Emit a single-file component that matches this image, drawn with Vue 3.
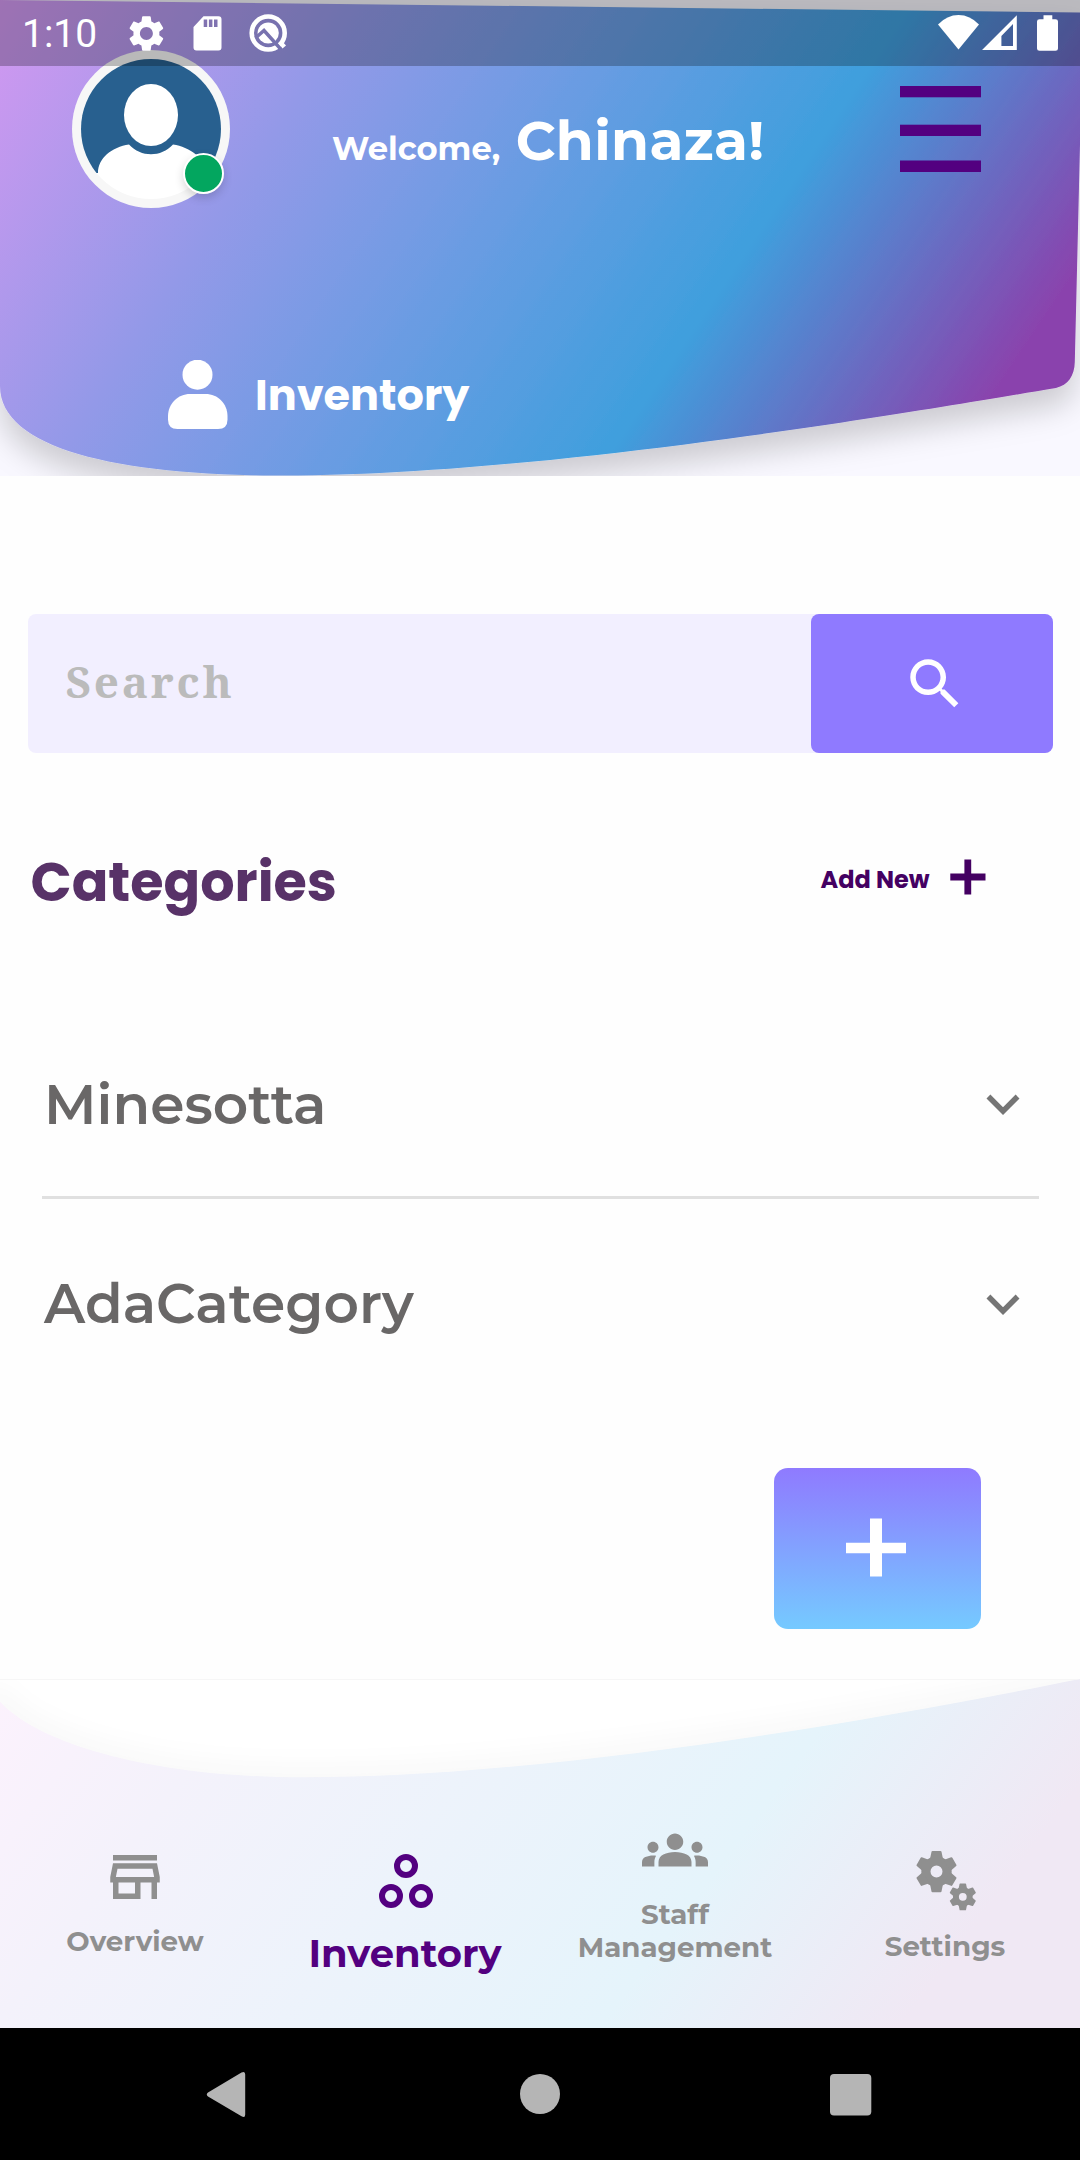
<script setup>
const categories = ['Minesotta', 'AdaCategory']
const toothAngles = [0, 60, 120, 180, 240, 300]
</script>

<template>
  <div class="screen">
    <header class="header">
      <svg class="header-bg" width="1080" height="476" viewBox="0 0 1080 476">
        <defs>
          <linearGradient id="headerFill" gradientUnits="userSpaceOnUse" x1="0" y1="0" x2="867" y2="582">
            <stop offset="0" stop-color="#d398f1" />
            <stop offset=".29" stop-color="#9399e8" />
            <stop offset=".727" stop-color="#3f9fdd" />
            <stop offset="1" stop-color="#8a43ad" />
          </linearGradient>
          <filter id="headerShadow" x="-10%" y="-10%" width="120%" height="135%">
            <feDropShadow dx="0" dy="18" stdDeviation="15" flood-color="#000" flood-opacity=".18" />
          </filter>
        </defs>
        <rect width="1080" height="476" fill="#f9f8ff" />
        <path filter="url(#headerShadow)" fill="url(#headerFill)" d="M0 0L1080 12.500V145L1074.800 362C1074.500 376 1068 385 1056 388C900 414 540 475.500 282 475.500C115 475.500 0 448 0 386Z" />
      </svg>

      <div class="header-top">
        <div class="avatar">
          <svg width="158" height="158" viewBox="0 0 158 158">
            <defs><clipPath id="face"><circle cx="79" cy="79" r="70" /></clipPath></defs>
            <circle cx="79" cy="79" r="79" fill="#f7f7f7" />
            <g clip-path="url(#face)">
              <path fill="#28608f" d="M0 0H158V123H0Z" />
              <path fill="#fff" d="M26 123C26 108 40 97 57 94.500C69 107.500 89 107.500 101 94.500C118 97 132 108 136 123H158V158H0V123Z" />
              <ellipse cx="79" cy="65" rx="27" ry="31" fill="#fff" />
            </g>
          </svg>
          <span class="online"></span>
        </div>
        <div class="greeting">
          <span class="welcome">Welcome,</span>
          <span class="name">Chinaza!</span>
        </div>
        <svg class="menu" width="81" height="88" viewBox="0 0 81 88" fill="#530080">
          <rect y="1" width="81" height="11.300" />
          <rect y="39.700" width="81" height="11.300" />
          <rect y="75.500" width="81" height="11.500" />
        </svg>
      </div>

      <div class="page-title">
        <svg width="60" height="70" viewBox="0 0 60 70" fill="#fff">
          <circle cx="29.500" cy="14.700" r="15" />
          <path d="M22 34H37.500C50 34 59.500 43.500 59.500 56.500V59.500Q59.500 69 50 69H9.500Q0 69 0 59.500V56.500C0 43.500 10 34 22 34Z" />
        </svg>
        <h1>Inventory</h1>
      </div>

      <div class="status-bar">
        <span class="clock">1:10</span>
        <svg class="status-icons" width="985" height="66" viewBox="95 0 985 66" fill="#fff">
          <defs>
            <mask id="cut" maskUnits="userSpaceOnUse" x="245" y="10" width="46" height="48">
              <rect x="245" y="10" width="46" height="48" fill="#fff" />
              <path d="M255.500 38L264 30.500L282 50.500" fill="none" stroke="#000" stroke-width="3.400" />
            </mask>
          </defs>
          <path transform="translate(124.800 11.900) scale(1.8)" d="M19.140 12.940c.04-.3.060-.61.060-.94 0-.32-.02-.64-.07-.94l2.030-1.580c.18-.14.23-.41.12-.61l-1.920-3.320c-.12-.22-.37-.29-.59-.22l-2.390.96c-.5-.38-1.030-.7-1.620-.94l-.36-2.540c-.04-.24-.24-.41-.48-.41h-3.840c-.24 0-.43.17-.47.41l-.36 2.540c-.59.24-1.130.57-1.620.94l-2.390-.96c-.22-.08-.47 0-.59.22L2.740 8.870c-.12.21-.08.47.12.61l2.030 1.580c-.05.3-.09.63-.09.94s.02.64.07.94l-2.030 1.580c-.18.14-.23.41-.12.61l1.920 3.320c.12.22.37.29.59.22l2.390-.96c.5.38 1.030.7 1.620.94l.36 2.540c.05.24.24.41.48.41h3.840c.24 0 .44-.17.47-.41l.36-2.540c.59-.24 1.130-.56 1.620-.94l2.390.96c.22.08.47 0 .59-.22l1.920-3.320c.12-.22.07-.47-.12-.61l-2.010-1.580zM12 15.600c-1.980 0-3.600-1.620-3.600-3.600s1.620-3.600 3.600-3.600 3.600 1.620 3.600 3.600-1.620 3.600-3.600 3.600z" />
          <path fill-rule="evenodd" d="M203.500 16.300H218.500Q221.500 16.300 221.500 19.300V47.500Q221.500 50.500 218.500 50.500H196.500Q193.500 50.500 193.500 47.500V27ZM203.700 19.500V27H207.200V19.500ZM208.900 19.500V27H212.400V19.500ZM214 19.500V27H217.500V19.500Z" />
          <g mask="url(#cut)">
            <circle cx="268.200" cy="33" r="16.500" fill="none" stroke="#fff" stroke-width="4.600" />
            <circle cx="268.200" cy="33" r="10.600" />
          </g>
          <path d="M278.500 43L281.500 40.500L286 45.500L282.500 48.500Z" />
          <path d="M958.500 49.500L938 24.500Q947 15 958.500 15T979 24.500Z" />
          <path fill-rule="evenodd" d="M982 50L1016.800 15.300V50ZM1001.400 46V36L1013 24V46Z" />
          <path d="M1043.500 15.200H1052.300V19.200H1055.500Q1058 19.200 1058 21.500V48.500Q1058 50.800 1055.500 50.800H1039.500Q1037 50.800 1037 48.500V21.500Q1037 19.200 1039.500 19.200H1043.500Z" />
        </svg>
      </div>
    </header>

    <main class="content">
      <div class="search">
        <span class="search-field">Search</span>
        <button class="search-button" type="button">
          <svg width="66" height="66" viewBox="0 0 24 24" fill="#fff"><path d="M15.500 14h-.79l-.28-.27C15.410 12.590 16 11.110 16 9.500 16 5.910 13.090 3 9.500 3S3 5.910 3 9.500 5.910 16 9.500 16c1.610 0 3.090-.59 4.230-1.570l.27.28v.79l5 4.990L20.490 19l-4.990-5zm-6 0C7.010 14 5 11.990 5 9.500S7.010 5 9.500 5 14 7.010 14 9.500 11.990 14 9.500 14z" /></svg>
        </button>
      </div>

      <div class="section-head">
        <h2>Categories</h2>
        <div class="add-new">
          <span>Add New</span>
          <svg width="36" height="36" viewBox="0 0 36 36" fill="#440062"><path d="M14.400 .5h6.800v14.100h14.300v6.800H21.200v14.100h-6.800V21.400H.3v-6.800h14.100z" /></svg>
        </div>
      </div>

      <ul class="categories">
        <li v-for="name in categories" :key="name">
          <span>{{ name }}</span>
          <svg width="66" height="66" viewBox="0 0 24 24" fill="#757575"><path d="M16.590 8.590L12 13.170 7.410 8.590 6 10l6 6 6-6z" /></svg>
        </li>
      </ul>

      <button class="fab" type="button">
        <svg width="60" height="60" viewBox="0 0 60 60" fill="#fff"><path d="M24 .6h12v24.200h24v10.400H36v23.400H24V35.200H0V24.800h24z" /></svg>
      </button>
    </main>

    <nav class="tabs">
      <svg class="tabs-bg" width="1080" height="349" viewBox="0 0 1080 349">
        <defs>
          <linearGradient id="tabsFill" gradientUnits="userSpaceOnUse" x1="0" y1="0" x2="746" y2="555">
            <stop offset="0" stop-color="#fcf2fd" />
            <stop offset=".22" stop-color="#f4f2fb" />
            <stop offset=".74" stop-color="#e5f4fb" />
            <stop offset="1" stop-color="#f0e8f4" />
          </linearGradient>
          <clipPath id="waveClip"><path d="M0 22.700C40 66 155 98.300 303 98.300C540 98.300 850 46 1080 0H0Z" /></clipPath>
          <filter id="waveBlur" x="-5%" y="-50%" width="110%" height="200%"><feGaussianBlur stdDeviation="11" /></filter>
        </defs>
        <rect width="1080" height="349" fill="url(#tabsFill)" />
        <g clip-path="url(#waveClip)">
          <rect width="1080" height="100" fill="#fff" />
          <path filter="url(#waveBlur)" fill="none" stroke="#000" stroke-opacity=".025" stroke-width="26" d="M-10 12L0 22.700C40 66 155 98.300 303 98.300C540 98.300 850 46 1080 0L1140 -12" />
          <rect width="1080" height="1" fill="#f6f6f6" />
        </g>
      </svg>

      <div class="tab overview">
        <svg width="66" height="66" viewBox="0 0 24 24"><path d="M18.360 9l.6 3H5.040l.6-3h12.720M20 4H4v2h16V4zm0 3H4l-1 5v2h1v6h10v-6h4v6h2v-6h1v-2l-1-5zM6 18v-4h6v4H6z" /></svg>
        <span class="label">Overview</span>
      </div>
      <div class="tab active">
        <svg width="54" height="54" viewBox="0 0 54 54" fill="none" stroke="#530080" stroke-width="6">
          <circle cx="27" cy="12" r="9" /><circle cx="12" cy="42" r="9" /><circle cx="42" cy="42" r="9" />
        </svg>
        <span class="label">Inventory</span>
      </div>
      <div class="tab staff">
        <svg width="66" height="66" viewBox="0 0 24 24"><path d="M12 12.750c1.630 0 3.070.39 4.240.9 1.080.48 1.760 1.560 1.760 2.730V18H6v-1.610c0-1.180.68-2.260 1.760-2.730 1.170-.52 2.610-.91 4.240-.91zM4 13c1.100 0 2-.9 2-2s-.9-2-2-2-2 .9-2 2 .9 2 2 2zm1.130 1.100c-.37-.06-.74-.1-1.130-.1-.99 0-1.930.21-2.780.58C.48 14.900 0 15.620 0 16.430V18h4.500v-1.610c0-.83.23-1.610.63-2.290zM20 13c1.100 0 2-.9 2-2s-.9-2-2-2-2 .9-2 2 .9 2 2 2zm4 3.430c0-.81-.48-1.530-1.220-1.850-.85-.37-1.790-.58-2.780-.58-.39 0-.76.04-1.130.1.4.68.63 1.460.63 2.290V18H24v-1.570zM12 6c1.660 0 3 1.340 3 3s-1.340 3-3 3-3-1.340-3-3 1.340-3 3-3z" /></svg>
        <span class="label">Staff<br>Management</span>
      </div>
      <div class="tab settings">
        <svg width="60" height="60" viewBox="0 0 60 60">
          <g transform="translate(20.500 20.600)">
            <circle r="10.600" fill="none" stroke="#8f8f8f" stroke-width="9.200" />
            <path v-for="a in toothAngles" :key="a" :transform="`rotate(${a})`" d="M-6.600-12L-5-19.800Q-4.900-20.600-4-20.600H4Q4.900-20.600 5-19.800L6.600-12Z" />
          </g>
          <g transform="translate(46.800 45.800) scale(.65)">
            <circle r="10.600" fill="none" stroke="#8f8f8f" stroke-width="9.200" />
            <path v-for="a in toothAngles" :key="a" :transform="`rotate(${a})`" d="M-6.600-12L-5-19.800Q-4.900-20.600-4-20.600H4Q4.900-20.600 5-19.800L6.600-12Z" />
          </g>
        </svg>
        <span class="label">Settings</span>
      </div>
    </nav>

    <footer class="system-nav">
      <svg width="1080" height="132" viewBox="0 0 1080 132" fill="#b5b5b5">
        <path d="M241.500 44.600Q245.200 42.500 245.200 46.500V86.500Q245.200 90.500 241.500 88.300L208 68.500Q205.500 66.500 208 64.500Z" />
        <circle cx="540" cy="66" r="20" />
        <rect x="830" y="46" width="41.300" height="41.500" rx="4" />
      </svg>
    </footer>
  </div>
</template>

<style scoped>
.screen {
  width: 1080px;
  height: 2160px;
  display: flex;
  flex-direction: column;
  background: #fefefe;
  font-family: "Montserrat", "Inter", sans-serif;
  overflow: hidden;
  white-space: nowrap;
}
.header { position: relative; height: 476px; flex: none; }
.header-bg { position: absolute; left: 0; top: 0; }
.header-top {
  position: relative;
  display: flex;
  align-items: flex-start;
  padding: 50px 99px 0 72px;
  height: 158px;
}
.avatar { position: relative; width: 158px; height: 158px; }
.online {
  position: absolute;
  left: 111px;
  top: 102.5px;
  width: 37px;
  height: 37px;
  border: 2px solid #fff;
  border-radius: 50%;
  background: #03a65f;
  box-shadow: 0 4px 10px rgba(0, 0, 0, .16);
}
.greeting { display: flex; align-items: baseline; margin: 61px 0 0 102px; color: #fff; font-weight: 700; line-height: 60px; }
.welcome { font-size: 32.2px; }
.name { font-size: 55px; margin-left: 15.5px; letter-spacing: .35px; }
.menu { margin: 35px 0 0 auto; }
.page-title { position: relative; display: flex; align-items: flex-start; margin: 152px 0 0 168px; }
.page-title h1 { margin: 10px 0 0 27px; color: #fff; font: 700 43px/50px "Poppins", "Inter", sans-serif; }
.status-bar {
  position: absolute;
  inset: 0 0 auto 0;
  height: 66px;
  display: flex;
  background: rgba(0, 0, 0, .25);
}
.clock { width: 73px; padding-left: 22px; color: #fff; font: 400 39px/69px "Roboto", sans-serif; }
.status-icons { flex: none; }

.content { display: flex; flex-direction: column; height: 1203px; flex: none; }
.search { display: flex; margin: 138px 27.5px 0; height: 138.5px; background: #f2efff; border-radius: 8px; }
.search-field { flex: 1; padding-left: 38px; color: #bbb; font: 700 44px/135px "Noto Serif", "DejaVu Serif", serif; letter-spacing: 2.75px; }
.search-button { width: 241.5px; border: 0; border-radius: 8px; background: #8f7aff; display: flex; align-items: center; justify-content: center; padding: 1px 0 0 7px; }
.section-head { display: flex; justify-content: space-between; align-items: flex-start; margin: 89px 94px 0 30.5px; height: 80px; }
.section-head h2 { margin: 0; color: #583268; font: 700 54px/81px "Poppins", "Inter", sans-serif; }
.add-new { display: flex; margin-top: 17.5px; color: #440062; font: 700 24px/42px "Poppins", "Inter", sans-serif; gap: 20.5px; }
.categories { list-style: none; margin: 87px 41.5px 0; padding: 0; }
.categories li {
  display: flex;
  align-items: center;
  justify-content: space-between;
  height: 209px;
  padding: 0 2.5px;
  color: #696767;
  font-size: 55px;
  font-weight: 600;
}
.categories li:first-child { height: 183.5px; padding-top: 4px; border-bottom: 3px solid #e0e0e0; }
.fab {
  align-self: flex-end;
  width: 207.5px;
  height: 161px;
  margin: 60px 99px 0 0;
  padding: 0 3px 2px 0;
  border: 0;
  border-radius: 14px;
  background: linear-gradient(#8f7aff, #75caff);
  display: flex;
  align-items: center;
  justify-content: center;
}

.tabs { position: relative; display: grid; grid-template-columns: repeat(4, 270px); height: 349px; flex: none; }
.tabs-bg { position: absolute; left: 0; top: 0; }
.tab { position: relative; display: flex; flex-direction: column; align-items: center; fill: #8f8f8f; color: #8f8f8f; text-align: center; }
.label { font-size: 27.7px; font-weight: 700; line-height: 33px; }
.overview { padding-top: 165px; }
.overview .label { margin-top: 15px; }
.active { padding-top: 175px; }
.active svg { margin-left: 2px; }
.active .label { margin-top: 23px; font-size: 38.5px; line-height: 46px; color: #530080; }
.staff { padding-top: 137.5px; }
.staff .label { margin-top: 15px; }
.settings { padding-top: 172px; }
.settings svg { margin-left: 2px; }
.settings .label { margin-top: 19px; }
.system-nav { height: 132px; flex: none; background: #000; }
.system-nav svg { display: block; }
</style>

<style>
body { margin: 0; }
</style>
